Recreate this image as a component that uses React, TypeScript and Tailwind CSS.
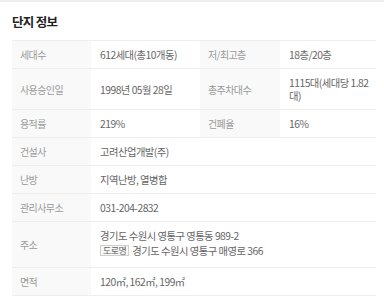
const font = { fontFamily: '"Noto Sans CJK KR", "Noto Sans", sans-serif' };

type Row = { label: string; value: React.ReactNode; label2?: string; value2?: React.ReactNode; tall?: boolean };

const rows: Row[] = [
  { label: "세대수", value: "612세대(총10개동)", label2: "저/최고층", value2: "18층/20층" },
  { label: "사용승인일", value: "1998년 05월 28일", label2: "총주차대수", value2: "1115대(세대당 1.82대)" },
  { label: "용적률", value: "219%", label2: "건폐율", value2: "16%" },
  { label: "건설사", value: "고려산업개발(주)" },
  { label: "난방", value: "지역난방, 열병합" },
  { label: "관리사무소", value: "031-204-2832" },
  {
    label: "주소",
    tall: true,
    value: (
      <>
        <div>경기도 수원시 영통구 영통동 989-2</div>
        <div className="mt-[2px] flex h-[13px] items-center">
          <span className="mr-[3px] inline-flex h-[11px] items-center border border-[#cfcfcf] bg-[#f7f7f7] px-[2px] text-[9px] leading-none text-[#666]">
            도로명
          </span>
          경기도 수원시 영통구 매영로 366
        </div>
      </>
    ),
  },
  { label: "면적", value: "120㎡, 162㎡, 199㎡" },
];

const labelCls = "bg-[#f9f9f9] pl-[8px] pr-[4px] py-[7px] align-middle text-[10px] text-[#9a9a9a] tracking-[-0.6px]";
const valueCls = "pl-[9px] pr-[1px] align-middle text-[10.3px] text-[#666] tracking-[-0.5px]";

export default function App() {
  return (
    <div className="min-h-[299px] w-full bg-white" style={font}>
      <div className="h-[2px] bg-[#eeeeee]" />
      <div className="px-[12px] pb-[9px] pt-[11px]">
        <h2 className="text-[12.5px] font-bold leading-[18px] tracking-[-0.7px] text-[#222]">단지 정보</h2>
      </div>
      <table className="ml-[12px] w-[364px] table-fixed border-collapse leading-[13px]">
        <colgroup>
          <col className="w-[79px]" />
          <col className="w-[109px]" />
          <col className="w-[80px]" />
          <col className="w-[96px]" />
        </colgroup>
        <tbody>
          {rows.map((r) => (
            <tr key={r.label} className="border-y border-[#eeeeee]">
              <th className={`${labelCls} text-left font-normal`}>{r.label}</th>
              {r.label2 ? (
                <>
                  <td className={`${valueCls} py-[7px]`}>{r.value}</td>
                  <th className={`${labelCls} text-left font-normal`}>{r.label2}</th>
                  <td className={`${valueCls} py-[7px]`}>{r.value2}</td>
                </>
              ) : (
                <td colSpan={3} className={`${valueCls} ${r.tall ? "pb-[10px] pt-[7px]" : "py-[7px]"}`}>
                  {r.value}
                </td>
              )}
            </tr>
          ))}
        </tbody>
      </table>
    </div>
  );
}
